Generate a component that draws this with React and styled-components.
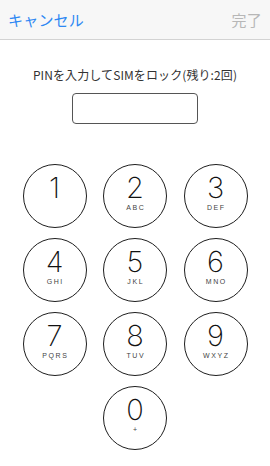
import React from 'react';
import styled, { createGlobalStyle } from 'styled-components';

const GlobalStyle = createGlobalStyle`
  html, body {
    margin: 0;
    padding: 0;
    background: #fff;
  }
  body {
    font-family: "Noto Sans CJK JP", "Noto Sans", sans-serif;
  }
`;

const Screen = styled.div`
  width: 270px;
  height: 466px;
  overflow: hidden;
  background: #fff;
`;

const NavBar = styled.div`
  height: 39px;
  background: #f7f7f7;
  border-bottom: 1px solid #d3d3d3;
  display: flex;
  align-items: center;
  justify-content: space-between;
  padding: 0 8px;
  box-sizing: content-box;
`;

const NavButton = styled.span`
  font-size: 15px;
  letter-spacing: 0.2px;
  color: ${(p) => (p.disabled ? '#b7b7b7' : '#2e88f3')};
`;

const Body = styled.div`
  display: flex;
  flex-direction: column;
  align-items: center;
`;

const Prompt = styled.div`
  margin-top: 26px;
  font-size: 12px;
  line-height: 17px;
  letter-spacing: 0.1px;
  color: #333;
`;

const CodeBox = styled.div`
  margin-top: 10px;
  width: 124px;
  height: 29px;
  border: 1px solid #555;
  border-radius: 4px;
`;

const Pad = styled.div`
  margin-top: 40px;
  display: grid;
  grid-template-columns: repeat(3, 64px);
  column-gap: 16.5px;
  row-gap: 10px;
`;

const Key = styled.div`
  width: 64px;
  height: 64px;
  box-sizing: border-box;
  border: 1.5px solid #1e1e1e;
  border-radius: 50%;
  display: flex;
  flex-direction: column;
  align-items: center;
  grid-column: ${(p) => p.col || 'auto'};
`;

const Digit = styled.span`
  margin-top: 8px;
  font-family: Inter, Roboto, sans-serif;
  font-weight: 200;
  font-size: 29px;
  line-height: 30px;
  color: #111;
`;

const Letters = styled.span`
  margin-top: 1px;
  font-family: "Liberation Sans", Arial, sans-serif;
  font-size: 7px;
  letter-spacing: 1.6px;
  padding-left: 1.6px;
  color: #444;
`;

const keys = [
  ['1', ''],
  ['2', 'ABC'],
  ['3', 'DEF'],
  ['4', 'GHI'],
  ['5', 'JKL'],
  ['6', 'MNO'],
  ['7', 'PQRS'],
  ['8', 'TUV'],
  ['9', 'WXYZ'],
  ['0', '+'],
];

const App = () => {
  return (
    <Screen>
      <GlobalStyle />
      <NavBar>
        <NavButton>キャンセル</NavButton>
        <NavButton disabled>完了</NavButton>
      </NavBar>
      <Body>
        <Prompt>PINを入力してSIMをロック(残り:2回)</Prompt>
        <CodeBox />
        <Pad>
          {keys.map(([d, l]) => (
            <Key key={d} col={d === '0' ? '2' : undefined}>
              <Digit>{d}</Digit>
              {l && <Letters>{l}</Letters>}
            </Key>
          ))}
        </Pad>
      </Body>
    </Screen>
  );
};

export default App;
